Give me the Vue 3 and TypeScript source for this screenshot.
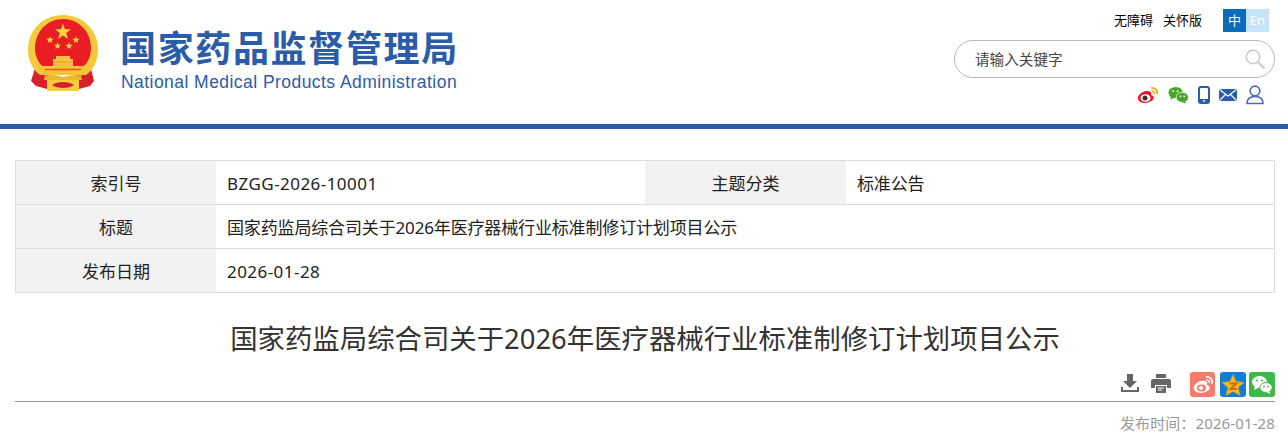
<script setup lang="ts">
const rows = [
  { k: '索引号', v: 'BZGG-2026-10001', k2: '主题分类', v2: '标准公告', latin: true },
  { k: '标题', v: '国家药监局综合司关于2026年医疗器械行业标准制修订计划项目公示', latin: false },
  { k: '发布日期', v: '2026-01-28', latin: true }
]
const title = '国家药监局综合司关于2026年医疗器械行业标准制修订计划项目公示'

function star(cx: number, cy: number, r: number): string {
  const pts: string[] = []
  for (let i = 0; i < 10; i++) {
    const rad = i % 2 === 0 ? r : r * 0.4
    const a = -Math.PI / 2 + (i * Math.PI) / 5
    pts.push(`${(cx + rad * Math.cos(a)).toFixed(2)},${(cy + rad * Math.sin(a)).toFixed(2)}`)
  }
  return pts.join(' ')
}
const stars = [star(35, 17, 8.5), star(22, 25, 4), star(48, 25, 4), star(29.500, 31, 3.800), star(41, 31, 3.800)]
</script>

<template>
  <div class="page">
    <header class="head">
      <div class="logo">
        <svg class="emblem" viewBox="0 0 70 77" width="70" height="77" aria-hidden="true">
          <path d="M8 50 L3 66 L8 71 L19 74 L25 62 Z" fill="#d8202a"/>
          <path d="M62 50 L66 66 L62 71 L51 74 L45 62 Z" fill="#d8202a"/>
          <path d="M35 0 C15 0 0 15 0 35 C0 46 5 55 12 60 H58 C65 55 70 46 70 35 C70 15 55 0 35 0Z" fill="#f6c93a"/>
          <path d="M35 4 C19 4 7 17 7 33 C7 41 10 47 14 51 H56 C60 47 63 41 63 33 C63 17 51 4 35 4Z" fill="#ea1d25"/>
          <polygon v-for="(s, i) in stars" :key="i" :points="s" fill="#f9d63c"/>
          <path d="M28 41 H42 V44 H45 V52 H25 V44 H28Z" fill="#f3c247"/>
          <path d="M25 47 H45" stroke="#e2952a" stroke-width=".8"/>
          <path d="M11 50 C20 53 50 53 59 50 L60 55 L53 61 C46 58 40 60 35 60 C30 60 24 58 17 61 L10 55Z" fill="#f5c335"/>
          <path d="M17 54.500 H53" stroke="#e85a24" stroke-width="1.300"/>
          <path d="M17 61 C22 59 28 60 35 62 C42 60 48 59 53 61 L54 65 H16Z" fill="#eeb52e"/>
          <path d="M19 65 H51 V76 H19Z" fill="#f6cb3c"/>
          <path d="M24 70 C29 66 41 66 46 70 C41 74 29 74 24 70Z" fill="#d8202a"/>
        </svg>
        <div class="brand">
          <div class="cn">国家药品监督管理局</div>
          <div class="en">National Medical Products Administration</div>
        </div>
      </div>
      <div class="tools">
        <div class="links">
          <a class="lk">无障碍</a>
          <a class="lk care">关怀版</a>
          <div class="lang"><span class="zh">中</span><span class="e">En</span></div>
        </div>
        <div class="search">
          <span class="ph">请输入关键字</span>
          <svg viewBox="0 0 20 20" width="20" height="20" aria-hidden="true">
            <circle cx="8" cy="8" r="6.800" fill="none" stroke="#c9c9c9" stroke-width="1.500"/>
            <path d="M13 13 L19.500 19.500" stroke="#c9c9c9" stroke-width="2"/>
          </svg>
        </div>
        <div class="icons">
          <svg viewBox="0 0 22 18" width="22" height="18" aria-hidden="true">
            <path d="M9 5 C4 6 0 10 1 13 C2 17 8 18 12 16 C16 15 18 12 16 10 C15 9 14 9 14 9 C15 6 13 5 9 5Z" fill="#e6162d"/>
            <ellipse cx="8.500" cy="12" rx="5" ry="3.800" fill="#fff"/>
            <circle cx="8" cy="12" r="2.500" fill="#333"/>
            <path d="M14 2 C18 1.500 21 4 20 8.500" fill="none" stroke="#f5a623" stroke-width="1.700"/>
            <path d="M14.500 5 C16.500 4.800 17.800 6 17.300 8" fill="none" stroke="#f5a623" stroke-width="1.500"/>
          </svg>
          <svg viewBox="0 0 22 18" width="21" height="18" aria-hidden="true">
            <ellipse cx="8" cy="6.500" rx="7.500" ry="6" fill="#4aa52a"/>
            <path d="M3 10 L2.500 14 L7 11.500Z" fill="#4aa52a"/>
            <ellipse cx="15" cy="11.500" rx="6.500" ry="5.300" fill="#4aa52a" stroke="#fff" stroke-width=".8"/>
            <path d="M18 15.500 L19.500 18 L15 16.500Z" fill="#4aa52a"/>
            <circle cx="5.500" cy="5" r="1" fill="#fff"/><circle cx="10" cy="5" r="1" fill="#fff"/>
            <circle cx="13" cy="10.500" r=".9" fill="#fff"/><circle cx="17" cy="10.500" r=".9" fill="#fff"/>
          </svg>
          <svg viewBox="0 0 12 18" width="12" height="18" aria-hidden="true">
            <rect x="1" y="1" width="10" height="16" rx="2" fill="none" stroke="#2a5caa" stroke-width="2"/>
            <rect x="1" y="13" width="10" height="4" fill="#2a5caa"/>
            <circle cx="6" cy="15" r="1" fill="#fff"/>
          </svg>
          <svg viewBox="0 0 18 14" width="18" height="14" aria-hidden="true">
            <rect x="0" y="1" width="18" height="12" rx="1" fill="#2a5caa"/>
            <path d="M0.500 1.500 L9 8 L17.500 1.500 M0.500 12.500 L6.500 6.500 M17.500 12.500 L11.500 6.500" fill="none" stroke="#fff" stroke-width="1.200"/>
          </svg>
          <svg viewBox="0 0 18 20" width="18" height="20" aria-hidden="true">
            <circle cx="9" cy="6" r="4.800" fill="none" stroke="#4b69b5" stroke-width="1.700"/>
            <path d="M1 18.500 C1 13.500 4.500 11.500 9 11.500 C13.500 11.500 17 13.500 17 18.500 Z" fill="none" stroke="#4b69b5" stroke-width="1.700" stroke-linejoin="round"/>
          </svg>
        </div>
      </div>
    </header>

    <main class="main">
      <div class="meta">
        <div v-for="r in rows" :key="r.k" class="row">
          <div class="label">{{ r.k }}</div>
          <div class="val" :class="{ half: r.k2, latin: r.latin }">{{ r.v }}</div>
          <template v-if="r.k2">
            <div class="label second">{{ r.k2 }}</div>
            <div class="val">{{ r.v2 }}</div>
          </template>
        </div>
      </div>

      <h1 class="title">{{ title }}</h1>

      <div class="actions">
        <svg class="act" viewBox="0 0 20 20" width="20" height="20" aria-hidden="true">
          <path d="M7 1 h6 v7 h4 l-7 7 -7-7 h4z" fill="#666"/>
          <path d="M1 14 v5 h18 v-5 h-2 v3 h-14 v-3z" fill="#666"/>
        </svg>
        <svg class="act" viewBox="0 0 20 20" width="20" height="20" aria-hidden="true">
          <path d="M5 1 h10 v4 h-10z" fill="#666"/>
          <path d="M2 6 h16 a2 2 0 0 1 2 2 v7 h-4 v-3 h-12 v3 h-4 v-7 a2 2 0 0 1 2-2z" fill="#666"/>
          <path d="M5 13 h10 v7 h-10z" fill="#666"/>
          <path d="M7 15 h6 M7 17 h4" stroke="#fff" stroke-width="1"/>
        </svg>
        <span class="share weibo">
          <svg viewBox="0 0 24 24" width="24" height="24" aria-hidden="true">
            <path d="M10 8 C5 9 2 13 3 16 C4 20 10 21 14 19 C18 18 20 15 18 13 C17 12 16 12 16 12 C17 9 15 7 10 8Z" fill="#fff"/>
            <ellipse cx="10.500" cy="15" rx="4.500" ry="3.400" fill="#f97a6a"/>
            <circle cx="10" cy="15" r="2" fill="#fff"/>
            <path d="M15 4 C19 3.500 22 6.500 21 11" fill="none" stroke="#fff" stroke-width="1.800"/>
            <path d="M15.500 7 C17.500 7 18.800 8 18.300 10" fill="none" stroke="#fff" stroke-width="1.500"/>
          </svg>
        </span>
        <span class="share qq">
          <svg viewBox="0 0 24 24" width="24" height="24" aria-hidden="true">
            <path d="M12 1.500 L15 8.500 L23 9.500 L17 14.500 L19 22.500 L12 18.500 L5 22.500 L7 14.500 L1 9.500 L9 8.500Z" fill="#f6bd16" stroke="#e89a10" stroke-width=".6"/>
            <path d="M8.500 10.500 H15.500 L9.500 16 H16" fill="none" stroke="#d9651c" stroke-width="2"/>
          </svg>
        </span>
        <span class="share wx">
          <svg viewBox="0 0 24 24" width="24" height="24" aria-hidden="true">
            <ellipse cx="9.500" cy="9" rx="7.500" ry="6" fill="#fff"/>
            <path d="M5 13 L4 17 L9 14.500Z" fill="#fff"/>
            <ellipse cx="16" cy="14.500" rx="6.200" ry="5" fill="#fff" stroke="#3cb949" stroke-width="1"/>
            <path d="M19 18 L20.500 21 L16 19Z" fill="#fff"/>
            <circle cx="7" cy="7.500" r="1" fill="#3cb949"/><circle cx="12" cy="7.500" r="1" fill="#3cb949"/>
            <circle cx="14" cy="13.500" r=".9" fill="#3cb949"/><circle cx="18" cy="13.500" r=".9" fill="#3cb949"/>
          </svg>
        </span>
      </div>
      <div class="pub">发布时间：2026-01-28</div>
    </main>
  </div>
</template>

<style>
html, body { margin: 0; background: #fff; }
</style>

<style scoped>
.page {
  width: 1288px;
  height: 445px;
  overflow: hidden;
  font-family: "Noto Sans", "Noto Sans CJK SC", sans-serif;
  color: #333;
}
.head {
  height: 124px;
  border-bottom: 5px solid #2a5caa;
  display: flex;
  justify-content: space-between;
}
.logo {
  display: flex;
  align-items: flex-start;
  padding: 15px 0 0 28px;
}
.emblem { display: block; }
.brand { margin: 6px 0 0 23px; width: 337px; }
.cn {
  font-family: "Noto Sans CJK SC", sans-serif;
  font-weight: 700;
  font-size: 36px;
  line-height: 50px;
  letter-spacing: 1.650px;
  margin-left: -1px;
  color: #2a5caa;
  white-space: nowrap;
}
.en {
  font-family: "Liberation Sans", sans-serif;
  font-size: 17.500px;
  line-height: 20px;
  margin-top: 1px;
  letter-spacing: .450px;
  color: #2a5caa;
  white-space: nowrap;
}
.tools {
  width: 334px;
  box-sizing: border-box;
  padding: 9px 13px 0 0;
  display: flex;
  flex-direction: column;
}
.links {
  display: flex;
  align-items: center;
  justify-content: flex-end;
  height: 23px;
  font-size: 13px;
  color: #000;
  padding-right: 6px;
}
.lk { line-height: 23px; }
.care { margin-left: 10px; }
.lang { display: flex; margin-left: 21px; }
.lang span {
  width: 23px;
  height: 23px;
  line-height: 23px;
  text-align: center;
  font-size: 13px;
}
.zh { background: #0a6cbc; color: #fff; }
.e { background: #c6e3fb; color: #fff; }
.search {
  margin-top: 8px;
  height: 38px;
  box-sizing: border-box;
  border: 1px solid #b8b8b8;
  border-radius: 20px;
  display: flex;
  align-items: center;
  justify-content: space-between;
  padding: 0 9px 1px 20px;
  font-size: 14.600px;
  color: #444;
}
.icons {
  display: flex;
  align-items: center;
  justify-content: flex-end;
  margin-top: 7px;
  padding-right: 11px;
  gap: 9px;
}
.main { padding: 31px 13px 0 15px; }
.meta {
  border: 1px solid #dcdcdc;
  border-bottom: 0;
  font-size: 17px;
  color: #222;
}
.row {
  display: flex;
  height: 44px;
  box-sizing: border-box;
  border-bottom: 1px solid #dcdcdc;
  line-height: 45px;
}
.label {
  width: 200px;
  flex: none;
  background: #f2f2f2;
  text-align: center;
}
.label.second { width: 201px; }
.val { flex: 1; padding-left: 11px; white-space: nowrap; letter-spacing: -.15px; }
.val.latin { letter-spacing: .450px; }
.val.half { flex: none; width: 429px; box-sizing: border-box; }
.title {
  margin: 26px 0 0;
  font-weight: 400;
  font-size: 27.400px;
  line-height: 40px;
  text-align: center;
  color: #333;
}
.actions {
  margin-top: 12px;
  height: 31px;
  box-sizing: border-box;
  border-bottom: 1px solid #999;
  display: flex;
  justify-content: flex-end;
  align-items: flex-start;
  padding-top: 1px;
}
.act { margin-top: 1px; margin-right: 11px; }
.act + .share { margin-left: 8px; }
.share {
  width: 26px;
  height: 25px;
  border-radius: 3px;
  display: flex;
  align-items: center;
  justify-content: center;
  margin-left: 3px;
}
.weibo { background: #f97a6a; width: 25px; margin-right: 2px; }
.qq { background: #0f7ed8; }
.wx { background: #3cb949; }
.pub {
  margin-top: 10px;
  text-align: right;
  font-size: 15px;
  letter-spacing: .120px;
  color: #999;
}
</style>
